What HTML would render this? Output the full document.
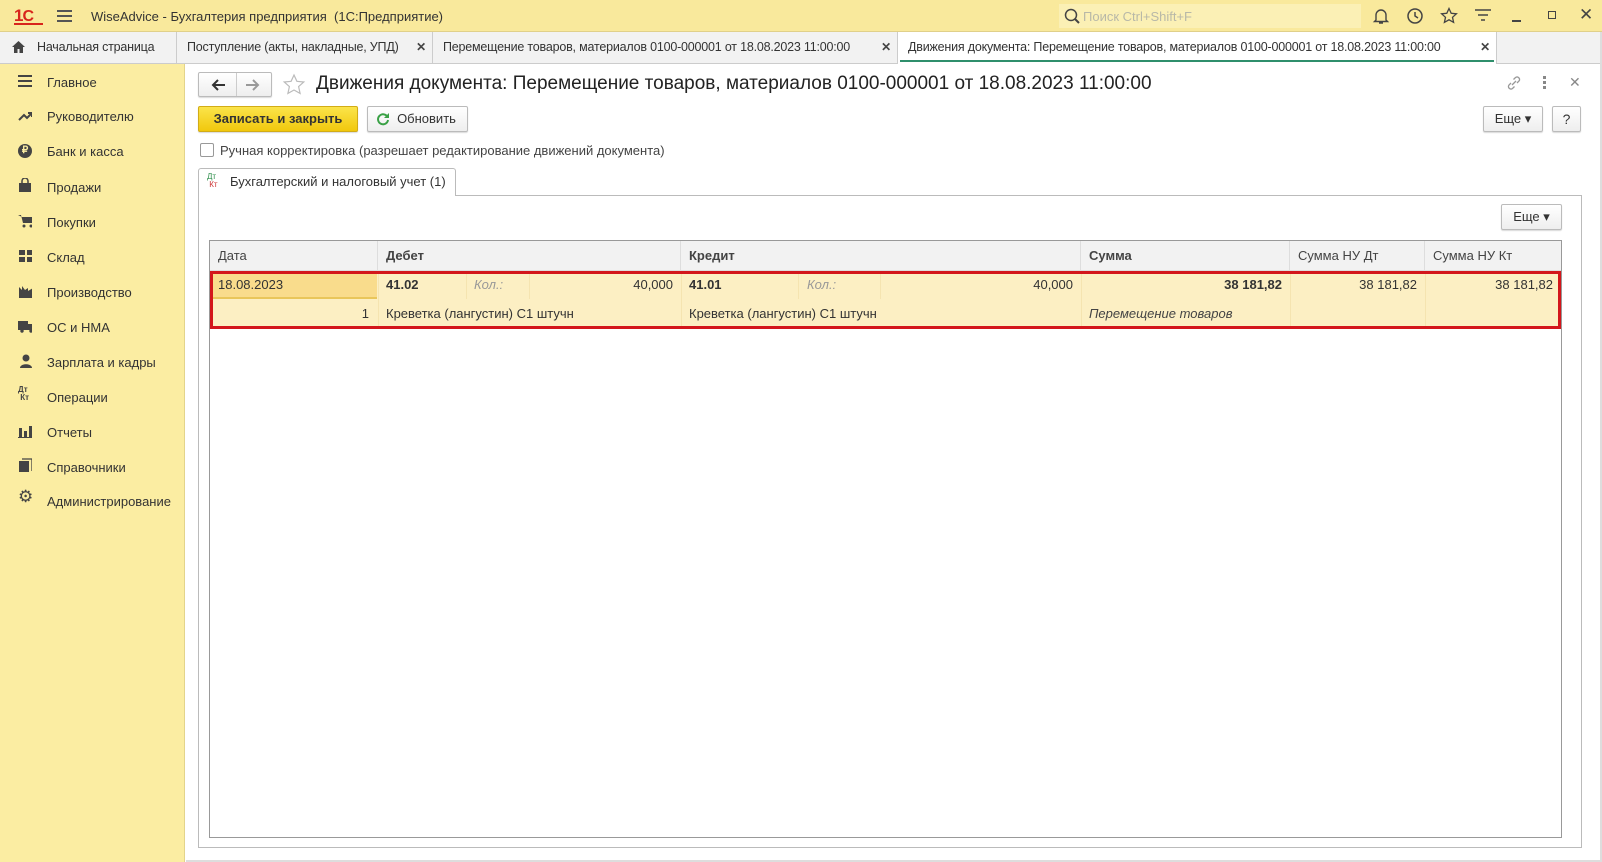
<!DOCTYPE html>
<html><head><meta charset="utf-8"><style>
*{box-sizing:border-box;margin:0;padding:0}
body{width:1602px;height:862px;overflow:hidden;background:#fff;font-family:"Liberation Sans",Arial,sans-serif;font-size:13px;color:#333;position:relative}
.abs{position:absolute}
#title{left:0;top:0;width:1602px;height:32px;background:#f9e99c;border-bottom:1px solid #e0d08a}
#tabs{left:0;top:32px;width:1602px;height:32px;background:#f2f2f2;border-bottom:1px solid #ccc}
.tab{position:absolute;top:0;height:31px;line-height:30px;border-right:1px solid #ccc;padding-left:10px;white-space:nowrap;color:#333;font-size:12.5px;letter-spacing:-0.2px}
.tab .x{position:absolute;right:6px;top:0;font-weight:bold;font-size:12px;color:#444}
#side{left:0;top:64px;width:185px;height:798px;background:#fbeda2;border-right:1px solid #e3d48b}
.si{position:absolute;left:47px;font-size:13px;color:#333}
.ic{position:absolute;left:18px;width:14px;height:14px}
.btn{position:absolute;border:1px solid #bbb;border-radius:2px;background:linear-gradient(#fff,#eee);box-shadow:0 1px 1px rgba(0,0,0,.15);text-align:center;color:#333}
.th{position:absolute;top:0;height:30px;line-height:30px;padding-left:8px;border-right:1px solid #ddd;color:#444}
.c{position:absolute;height:28px;line-height:28px;white-space:nowrap}
</style></head><body>
<div id="title" class="abs">
 <div class="abs" style="left:14px;top:6px;font-weight:bold;color:#d8251c;font-size:17px;letter-spacing:-1px">1<span style="font-size:16px">С</span></div>
 <div class="abs" style="left:14px;top:23px;width:29px;height:2px;background:#d8251c"></div>
 <div class="abs" style="left:57px;top:10px;width:15px;height:2px;background:#555;box-shadow:0 5px 0 #555,0 10px 0 #555"></div>
 <div class="abs" style="left:91px;top:9px;font-size:13px;color:#333">WiseAdvice - Бухгалтерия предприятия &nbsp;(1С:Предприятие)</div>
 <div class="abs" style="left:1059px;top:4px;width:302px;height:24px;background:#fbf0b5"></div>
 <svg class="abs" style="left:1064px;top:8px" width="16" height="16"><circle cx="7" cy="7" r="5.5" fill="none" stroke="#444" stroke-width="1.5"/><path d="M11 11l4 4" stroke="#444" stroke-width="2"/></svg>
 <div class="abs" style="left:1083px;top:9px;color:#b8b8a8;font-size:13px">Поиск Ctrl+Shift+F</div>
 <svg class="abs" style="left:1372px;top:7px" width="18" height="18"><path d="M4 13V8a5 5 0 0 1 10 0v5l1.5 1.5h-13z M7 16h4" fill="none" stroke="#444" stroke-width="1.4"/></svg>
 <svg class="abs" style="left:1406px;top:7px" width="18" height="18"><circle cx="9" cy="9" r="7" fill="none" stroke="#444" stroke-width="1.5"/><path d="M9 5v4l3 2" fill="none" stroke="#444" stroke-width="1.5"/></svg>
 <svg class="abs" style="left:1440px;top:7px" width="18" height="18"><path d="M9 1.5l2.2 4.8 5.2.5-3.9 3.5 1.1 5.1L9 12.8l-4.6 2.6 1.1-5.1L1.6 6.8l5.2-.5z" fill="none" stroke="#444" stroke-width="1.3"/></svg>
 <svg class="abs" style="left:1474px;top:7px" width="18" height="18"><path d="M1 3h16M4 8h10M7 13h4" stroke="#444" stroke-width="1.5"/></svg>
 <div class="abs" style="left:1512px;top:20px;width:9px;height:1.5px;background:#444"></div>
 <div class="abs" style="left:1548px;top:11px;width:8px;height:8px;border:1.3px solid #444"></div>
 <div class="abs" style="left:1579px;top:5px;font-size:17px;color:#444">✕</div>
</div>
<div id="tabs" class="abs">
 <div class="tab" style="left:0;width:177px;padding-left:37px">Начальная страница
  <svg class="abs" style="left:11px;top:8px" width="15" height="14"><path d="M7.5 1L1 7h2v6h3.5V9h2v4H12V7h2z" fill="#444"/></svg></div>
 <div class="tab" style="left:177px;width:256px">Поступление (акты, накладные, УПД)<span class="x">✕</span></div>
 <div class="tab" style="left:433px;width:465px">Перемещение товаров, материалов 0100-000001 от 18.08.2023 11:00:00<span class="x">✕</span></div>
 <div class="tab" style="left:898px;width:599px;background:#fff;height:32px">Движения документа: Перемещение товаров, материалов 0100-000001 от 18.08.2023 11:00:00<span class="x">✕</span>
  <div class="abs" style="left:2px;right:2px;bottom:2px;height:2px;background:#2f8f6c"></div></div>
</div>
<div id="side" class="abs">
 <div class="ic" style="top:11px;height:12px;border-top:2px solid #444;border-bottom:2px solid #444"><div style="margin-top:3px;height:2px;background:#444"></div></div><div class="si" style="top:11px">Главное</div>
 <svg class="ic" style="top:45px" width="16" height="14"><path d="M1 11l5-5 3 3 5-5M10 4h4v4" fill="none" stroke="#444" stroke-width="2"/></svg><div class="si" style="top:45px">Руководителю</div>
 <div class="ic" style="top:80px;border-radius:50%;background:#444;color:#fbeda2;font-size:10px;font-weight:bold;text-align:center;line-height:14px">₽</div><div class="si" style="top:80px">Банк и касса</div>
 <svg class="ic" style="top:114px" width="14" height="16"><path d="M1 5h12v10H1z" fill="#444"/><path d="M4 6V3a3 3 0 0 1 6 0v3" fill="none" stroke="#444" stroke-width="1.5"/></svg><div class="si" style="top:116px">Продажи</div>
 <svg class="ic" style="top:150px" width="16" height="14"><path d="M0 1h3l2 8h9l1-6H4" fill="#444"/><circle cx="6" cy="12" r="1.5" fill="#444"/><circle cx="13" cy="12" r="1.5" fill="#444"/></svg><div class="si" style="top:151px">Покупки</div>
 <svg class="ic" style="top:185px" width="16" height="14"><path d="M1 1h6v5H1zM9 1h6v5H9zM1 8h6v5H1zM9 8h6v5H9z" fill="#444"/></svg><div class="si" style="top:186px">Склад</div>
 <svg class="ic" style="top:220px" width="16" height="14"><path d="M1 14V3l3 3V2l3 4 3-2v3l5-3v10z" fill="#444"/></svg><div class="si" style="top:221px">Производство</div>
 <svg class="ic" style="top:255px" width="17" height="14"><path d="M0 2h10v9H0zM10 5h4l3 3v3h-7z" fill="#444"/><circle cx="4" cy="12" r="1.7" fill="#444"/><circle cx="13" cy="12" r="1.7" fill="#444"/></svg><div class="si" style="top:256px">ОС и НМА</div>
 <svg class="ic" style="top:290px" width="16" height="14"><circle cx="8" cy="4" r="3.5" fill="#444"/><path d="M2 14c0-5 12-5 12 0z" fill="#444"/></svg><div class="si" style="top:291px">Зарплата и кадры</div>
 <div class="ic" style="top:322px;font-size:8px;font-weight:bold;line-height:8px;color:#444">Дт<br>&nbsp;Кт</div><div class="si" style="top:326px">Операции</div>
 <svg class="ic" style="top:360px" width="16" height="14"><path d="M1 4h3v9H1zM6 7h3v6H6zM11 2h3v11h-3zM0 13h16v1H0z" fill="#444"/></svg><div class="si" style="top:361px">Отчеты</div>
 <svg class="ic" style="top:394px" width="16" height="16"><path d="M1 3h10v13H1z" fill="#444"/><path d="M4 1h10v12" fill="none" stroke="#444" stroke-width="1.3"/></svg><div class="si" style="top:396px">Справочники</div>
 <div class="ic" style="top:426px;font-size:17px;line-height:14px;color:#444">⚙</div><div class="si" style="top:430px">Администрирование</div>
</div>
<div class="btn" style="left:198px;top:72px;width:74px;height:25px"><div class="abs" style="left:37px;top:0;width:1px;height:23px;background:#ccc"></div>
 <svg class="abs" style="left:11px;top:5px" width="16" height="14"><path d="M15 7H3M8 2L3 7l5 5" fill="none" stroke="#333" stroke-width="2"/></svg>
 <svg class="abs" style="left:46px;top:5px" width="16" height="14"><path d="M1 7h12M8 2l5 5-5 5" fill="none" stroke="#999" stroke-width="2"/></svg></div>
<svg class="abs" style="left:282px;top:73px" width="24" height="24"><path d="M12 2l2.9 6.3 6.9.7-5.2 4.6 1.5 6.8L12 17l-6.1 3.4 1.5-6.8L2.2 9l6.9-.7z" fill="none" stroke="#bbb" stroke-width="1.2"/></svg>
<div class="abs" style="left:316px;top:73px;font-size:19px;color:#222">Движения документа: Перемещение товаров, материалов 0100-000001 от 18.08.2023 11:00:00</div>
<svg class="abs" style="left:1506px;top:75px" width="16" height="16"><path d="M6 10l4-4M5 8l-2 2a2.5 2.5 0 0 0 3.5 3.5l2-2M11 8l2-2a2.5 2.5 0 0 0-3.5-3.5l-2 2" fill="none" stroke="#999" stroke-width="1.3"/></svg>
<div class="abs" style="left:1543px;top:76px;width:3px;height:3px;background:#888;box-shadow:0 5px 0 #888,0 10px 0 #888"></div>
<div class="abs" style="left:1569px;top:74px;color:#888;font-size:14px">✕</div>
<div class="btn" style="left:198px;top:106px;width:160px;height:26px;line-height:24px;background:linear-gradient(#fbe44a,#f1c80d);border-color:#d2ac16;color:#333;font-weight:bold;font-size:13px">Записать и закрыть</div>
<div class="btn" style="left:367px;top:106px;width:101px;height:26px;line-height:24px;padding-left:18px">Обновить
 <svg class="abs" style="left:8px;top:5px" width="14" height="14"><path d="M11.5 5A5 5 0 1 0 12 8" fill="none" stroke="#3aa146" stroke-width="2"/><path d="M13 1v5H8z" fill="#3aa146"/></svg></div>
<div class="btn" style="left:1483px;top:106px;width:60px;height:26px;line-height:24px">Еще ▾</div>
<div class="btn" style="left:1552px;top:106px;width:29px;height:26px;line-height:24px;font-size:14px">?</div>
<div class="abs" style="left:200px;top:143px;width:14px;height:14px;border:1px solid #999;border-radius:2px;background:#fff"></div>
<div class="abs" style="left:220px;top:143px;color:#444">Ручная корректировка (разрешает редактирование движений документа)</div>
<div class="abs" style="left:198px;top:195px;width:1384px;height:653px;border:1px solid #bbb"></div>
<div class="abs" style="left:198px;top:168px;width:258px;height:28px;border:1px solid #bbb;border-bottom:none;background:#fff;border-radius:3px 3px 0 0"></div>
<div class="abs" style="left:207px;top:173px;font-size:8px;line-height:8px"><span style="color:#2f8f4c">Дт</span><br>&nbsp;<span style="color:#c33">Кт</span></div>
<div class="abs" style="left:230px;top:174px;color:#333">Бухгалтерский и налоговый учет (1)</div>
<div class="btn" style="left:1501px;top:204px;width:61px;height:26px;line-height:24px">Еще ▾</div>
<div class="abs" style="left:209px;top:240px;width:1353px;height:598px;border:1px solid #999;background:#fff">
 <div class="abs" style="left:0;top:0;width:1351px;height:30px;background:#f2f2f2;border-bottom:1px solid #ddd"></div>
 <div class="th" style="left:0;width:168px">Дата</div>
 <div class="th" style="left:168px;width:303px;font-weight:bold">Дебет</div>
 <div class="th" style="left:471px;width:400px;font-weight:bold">Кредит</div>
 <div class="th" style="left:871px;width:209px;font-weight:bold">Сумма</div>
 <div class="th" style="left:1080px;width:135px">Сумма НУ Дт</div>
 <div class="th" style="left:1215px;width:136px;border-right:none">Сумма НУ Кт</div>
 <div class="abs" style="left:0;top:30px;width:1351px;height:57px;background:#fcefc3"></div>
 <div class="abs" style="left:1px;top:31px;width:166px;height:27px;background:#f9dc8c;border-bottom:2px solid #e9c65a"></div>
 <div class="abs" style="left:168px;top:30px;width:1px;height:57px;background:#f5e4b0"></div>
 <div class="abs" style="left:471px;top:30px;width:1px;height:57px;background:#f5e4b0"></div>
 <div class="abs" style="left:871px;top:30px;width:1px;height:57px;background:#f5e4b0"></div>
 <div class="abs" style="left:1080px;top:30px;width:1px;height:57px;background:#f5e4b0"></div>
 <div class="abs" style="left:1215px;top:30px;width:1px;height:57px;background:#f5e4b0"></div>
 <div class="abs" style="left:256px;top:30px;width:1px;height:28px;background:#f5e4b0"></div>
 <div class="abs" style="left:319px;top:30px;width:1px;height:28px;background:#f5e4b0"></div>
 <div class="abs" style="left:588px;top:30px;width:1px;height:28px;background:#f5e4b0"></div>
 <div class="abs" style="left:670px;top:30px;width:1px;height:28px;background:#f5e4b0"></div>
 <div class="c" style="left:8px;top:30px">18.08.2023</div>
 <div class="c" style="left:176px;top:30px;font-weight:bold">41.02</div>
 <div class="c" style="left:264px;top:30px;font-style:italic;color:#999">Кол.:</div>
 <div class="c" style="left:319px;top:30px;width:144px;text-align:right">40,000</div>
 <div class="c" style="left:479px;top:30px;font-weight:bold">41.01</div>
 <div class="c" style="left:597px;top:30px;font-style:italic;color:#999">Кол.:</div>
 <div class="c" style="left:670px;top:30px;width:193px;text-align:right">40,000</div>
 <div class="c" style="left:871px;top:30px;width:201px;text-align:right;font-weight:bold">38 181,82</div>
 <div class="c" style="left:1080px;top:30px;width:127px;text-align:right">38 181,82</div>
 <div class="c" style="left:1215px;top:30px;width:128px;text-align:right">38 181,82</div>
 <div class="c" style="left:0;top:59px;width:159px;text-align:right">1</div>
 <div class="c" style="left:176px;top:59px">Креветка (лангустин) С1 штучн</div>
 <div class="c" style="left:479px;top:59px">Креветка (лангустин) С1 штучн</div>
 <div class="c" style="left:879px;top:59px;font-style:italic;color:#444">Перемещение товаров</div>
 <div class="abs" style="left:0;top:30px;width:1351px;height:58px;border:3px solid #d3161b"></div>
</div>
<div class="abs" style="left:1600px;top:32px;width:2px;height:830px;background:#ddd"></div>
<div class="abs" style="left:186px;top:860px;width:1416px;height:2px;background:#ddd"></div>
</body></html>
